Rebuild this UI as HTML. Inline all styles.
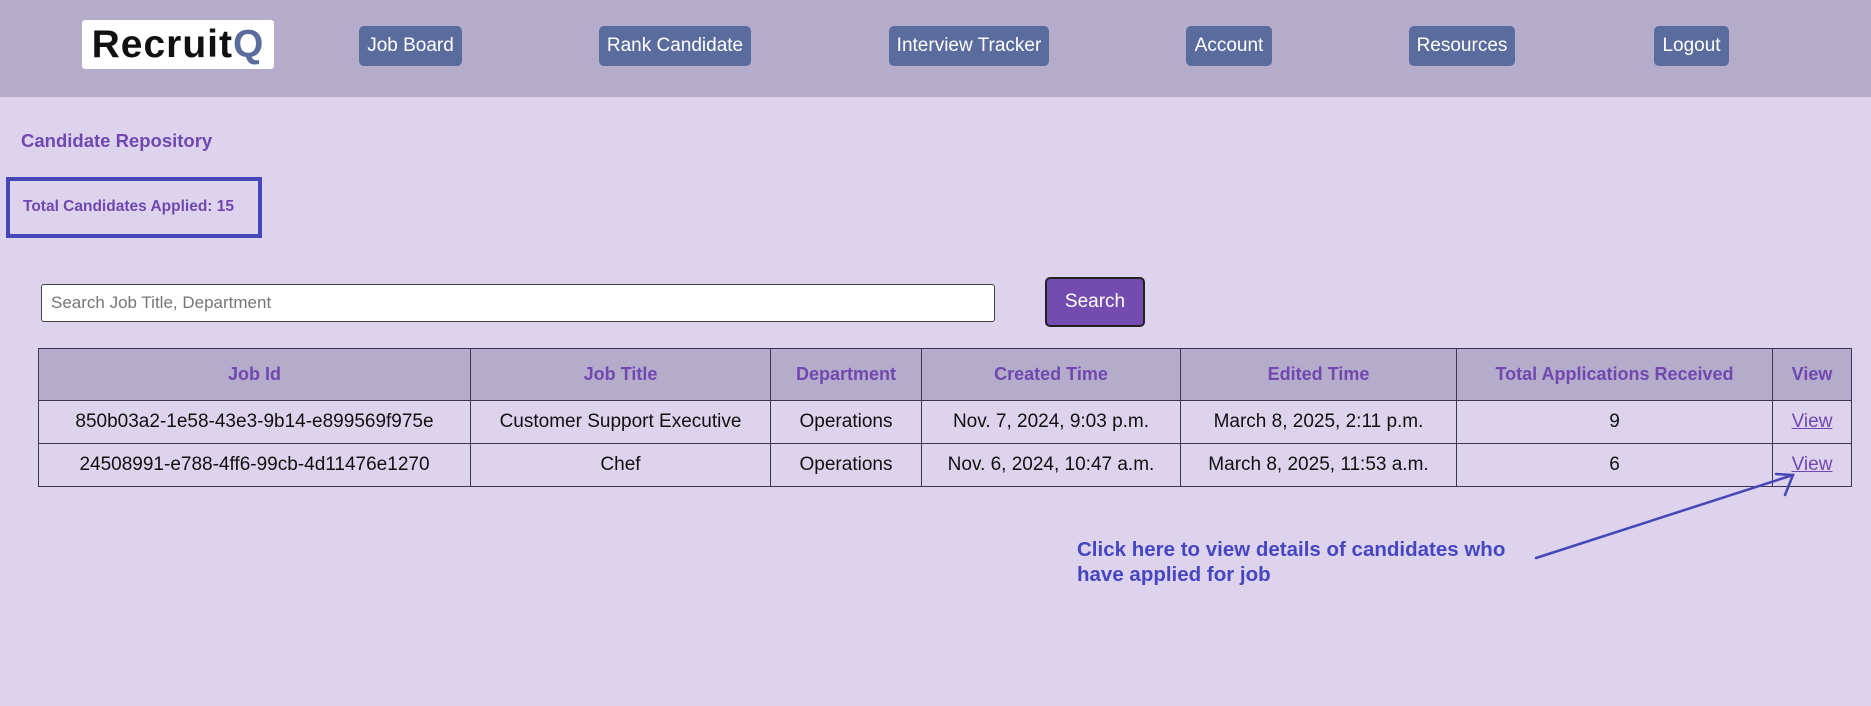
<!DOCTYPE html>
<html><head><meta charset="utf-8"><style>
*{box-sizing:border-box;margin:0;padding:0}
body{width:1871px;height:706px;background:#ddd3ec;font-family:"Liberation Sans",Arial,sans-serif;position:relative;overflow:hidden}
.hdr{position:absolute;left:0;top:0;width:1871px;height:97px;background:#b5abcb}
.logo{position:absolute;left:82px;top:20px;width:192px;height:49px;background:#fff;border-radius:3px;font-size:39px;font-weight:bold;line-height:49px;text-align:center;color:#111;letter-spacing:1px}
.logo span{color:#5a6b9d}
.btn{position:absolute;top:26px;height:40px;background:#5a6b9d;color:#fff;border-radius:5px;font-size:19px;line-height:40px;text-align:center}
.t{position:absolute;color:#7048b0;font-weight:bold}
.box{position:absolute;left:6px;top:177px;width:256px;height:61px;border:4px solid #4646b8}
input{position:absolute;left:41px;top:284px;width:954px;height:38px;border:1px solid #444;border-radius:3px;background:#fff;font-size:17px;padding-left:9px;font-family:"Liberation Sans",sans-serif;color:#666}
.sb{position:absolute;left:1045px;top:277px;width:100px;height:50px;background:#744cb0;border:2px solid #222;border-radius:5px;color:#fff;font-size:19px;line-height:45px;text-align:center}
table{position:absolute;left:38px;top:348px;width:1814px;border-collapse:collapse;font-size:19px}
td,th{border:1px solid #3a3550;text-align:center}
th{background:#b5abcb;color:#7048b0;height:52px;font-size:18px}
td{height:43px;color:#111}
a{color:#7048b0}
.ann{position:absolute;left:1077px;top:537px;color:#4646c0;font-weight:bold;font-size:20.5px;line-height:25px}
</style></head><body>
<div class="hdr">
<div class="logo">Recruit<span>Q</span></div>
<div class="btn" style="left:359px;width:103px">Job Board</div>
<div class="btn" style="left:599px;width:152px">Rank Candidate</div>
<div class="btn" style="left:889px;width:160px">Interview Tracker</div>
<div class="btn" style="left:1186px;width:86px">Account</div>
<div class="btn" style="left:1409px;width:106px">Resources</div>
<div class="btn" style="left:1654px;width:75px">Logout</div>
</div>
<div class="t" style="left:21px;top:130px;font-size:18.5px">Candidate Repository</div>
<div class="box"></div>
<div class="t" style="left:23px;top:198px;font-size:15.5px">Total Candidates Applied: 15</div>
<input placeholder="Search Job Title, Department">
<div class="sb">Search</div>
<table>
<colgroup><col style="width:432px"><col style="width:300px"><col style="width:151px"><col style="width:259px"><col style="width:276px"><col style="width:316px"><col></colgroup>
<tr><th>Job Id</th><th>Job Title</th><th>Department</th><th>Created Time</th><th>Edited Time</th><th>Total Applications Received</th><th>View</th></tr>
<tr><td>850b03a2-1e58-43e3-9b14-e899569f975e</td><td>Customer Support Executive</td><td>Operations</td><td>Nov. 7, 2024, 9:03 p.m.</td><td>March 8, 2025, 2:11 p.m.</td><td>9</td><td><a href="#">View</a></td></tr>
<tr><td>24508991-e788-4ff6-99cb-4d11476e1270</td><td>Chef</td><td>Operations</td><td>Nov. 6, 2024, 10:47 a.m.</td><td>March 8, 2025, 11:53 a.m.</td><td>6</td><td><a href="#">View</a></td></tr>
</table>
<div class="ann">Click here to view details of candidates who<br>have applied for job</div>
<svg style="position:absolute;left:0;top:0" width="1871" height="706"><g stroke="#4646b8" stroke-width="2.5" fill="none" stroke-linecap="round"><path d="M1536 558 L1793 475"/><path d="M1776 474 L1793 475 L1785 495"/></g></svg>
</body></html>
